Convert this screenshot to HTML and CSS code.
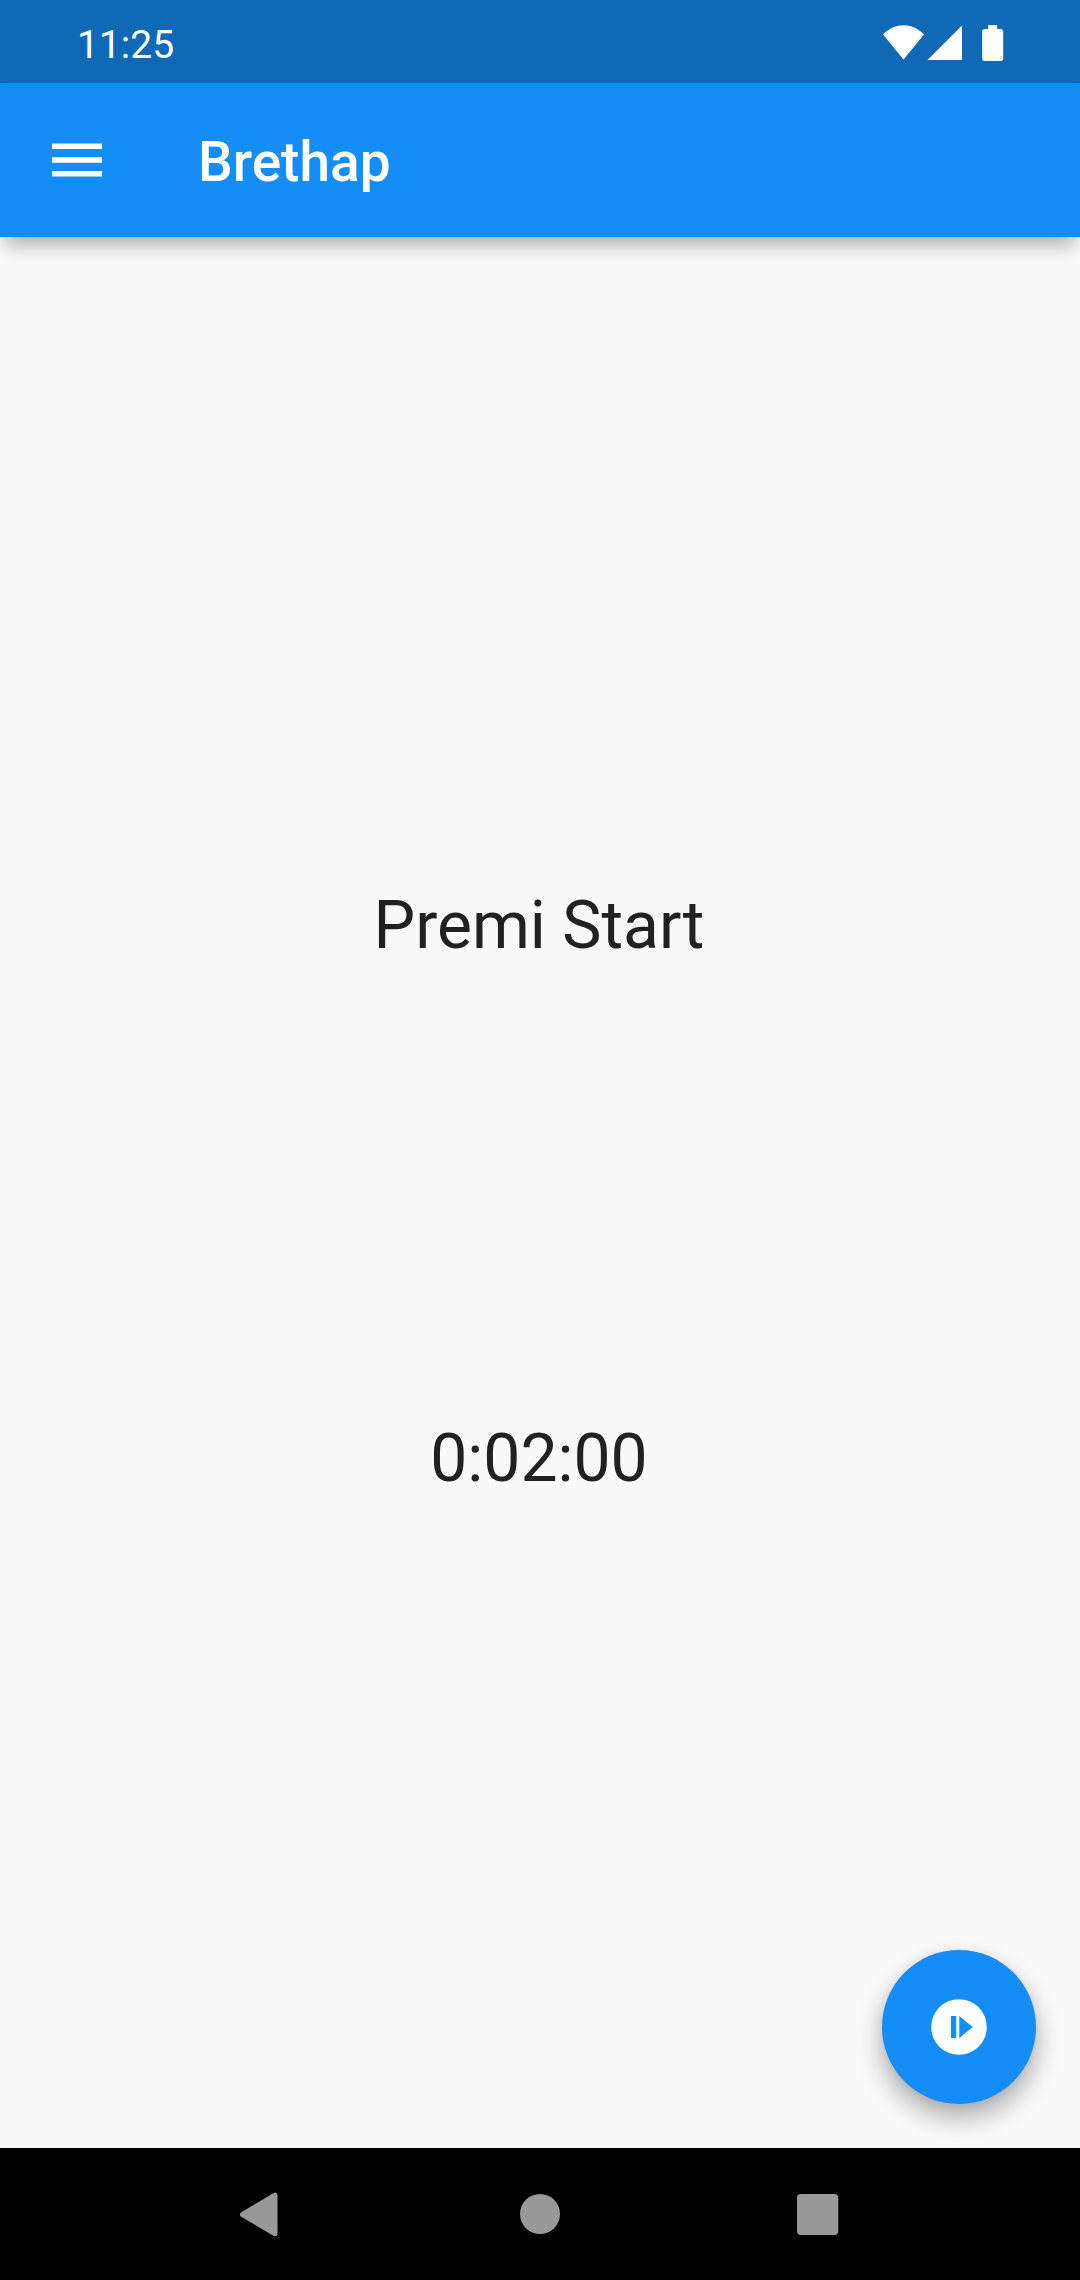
FILE: index.html
```html
<!DOCTYPE html>
<html lang="it">
<head>
<meta charset="utf-8">
<title>Brethap</title>
<link rel="stylesheet" href="styles.css">
</head>
<body>
<div class="screen">
  <div class="status-bar">
    <span class="clock">11:25</span>
    <svg class="status-icons" width="124" height="40" viewBox="0 0 124 40" fill="#fff">
      <path d="M1 9.500C13-2.800 30-2.800 42 9.500L21.500 34.500Z"/>
      <path d="M80 .5V35H45.500Z"/>
      <path d="M106.200 0h9v4h3.500q2.500 0 2.500 2.500v27q0 2.500-2.500 2.500h-16q-2.500 0-2.500-2.500v-27q0-2.500 2.500-2.500h3.500z"/>
    </svg>
  </div>
  <header class="app-bar">
    <svg class="menu" width="50" height="34" viewBox="0 0 50 34" fill="#fff"><path d="M0 .4h50v5.500H0zM0 14.200h50v5.500H0zM0 28h50v5.500H0z"/></svg>
    <h1 class="title">Brethap</h1>
  </header>
  <main class="content">
    <p class="prompt">Premi Start</p>
    <p class="timer">0:02:00</p>
    <button class="fab" aria-label="Start">
      <svg width="66" height="66" viewBox="0 0 24 24" fill="#fff"><path fill-rule="evenodd" d="M12 1.900a10.100 10.100 0 1 0 0 20.200 10.100 10.100 0 0 0 0-20.200zM9.100 8h1.900v8H9.100zM12.100 8l4.900 4-4.900 4z"/></svg>
    </button>
  </main>
  <nav class="nav-bar">
    <svg class="back" width="40" height="46" viewBox="0 0 40 46"><path d="M3.500 23.500L36 4.200V42.800Z"/></svg>
    <svg class="home" width="40" height="40" viewBox="0 0 40 40"><circle cx="20" cy="20" r="20"/></svg>
    <svg class="recent" width="42" height="42" viewBox="0 0 42 42"><rect y="1" width="41.300" height="41" rx="4"/></svg>
  </nav>
</div>
</body>
</html>
```
FILE: styles.css
```css
* { box-sizing: border-box; }
body { margin: 0; font-family: Roboto, sans-serif; }
.screen { width: 1080px; height: 2280px; display: flex; flex-direction: column; background: #f9f9f9; overflow: hidden; }
.status-bar { height: 83px; flex: none; background: #1069b7; color: #fff; display: flex; justify-content: space-between; padding: 25px 74px 0 77px; }
.clock { font-size: 39px; line-height: 40px; }
.app-bar { height: 154px; flex: none; background: #158df7; color: #fff; display: flex; align-items: center; padding-left: 52px; box-shadow: 0 13px 18px -5px rgba(0,0,0,.3); }
.title { margin: 0 0 0 96px; padding-top: 3px; font-size: 55px; font-weight: 500; line-height: 64px; }
.content { flex: 1; display: flex; flex-direction: column; align-items: center; color: #212121; font-size: 66px; line-height: 78px; padding-top: 650px; }
.content p { margin: 0; padding-right: 2px; }
.prompt { height: 533px; }
.fab { margin: auto 44px 44px auto; width: 154px; height: 154px; border: 0; border-radius: 50%; padding: 0; background: #158df7; display: grid; place-items: center; box-shadow: 0 13px 26px rgba(0,0,0,.32), 0 1px 8px rgba(0,0,0,.05); }
.nav-bar { height: 132px; flex: none; background: #000; fill: #999; display: flex; align-items: center; padding-left: 239px; }
.back path { stroke: #999; stroke-width: 5px; stroke-linejoin: round; }
.home { margin-left: 241px; }
.recent { margin-left: 237px; }
```
